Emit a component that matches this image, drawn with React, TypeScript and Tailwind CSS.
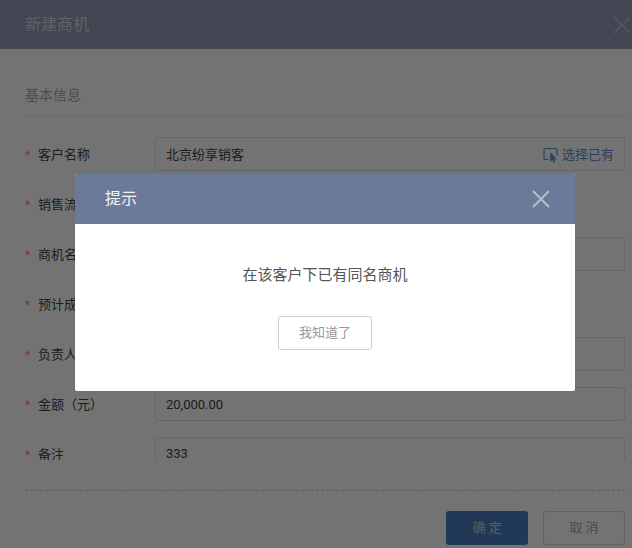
import { X } from 'lucide-react';

const rows = [
  { label: '客户名称', value: '北京纷享销客', pick: true },
  { label: '销售流程', value: '', plain: true },
  { label: '商机名称', value: '' },
  { label: '预计成交日期', value: '', plain: true },
  { label: '负责人', value: '' },
  { label: '金额（元）', value: '20,000.00' },
  { label: '备注', value: '333', top: true },
];

function PickIcon() {
  return (
    <svg width="16" height="16" viewBox="0 0 16 16" fill="none" stroke="currentColor" className="shrink-0">
      <path d="M5.5 12.5H2.5a1.5 1.5 0 0 1-1.5-1.5V3a1.5 1.5 0 0 1 1.5-1.5h10A1.5 1.5 0 0 1 14 3v5.5" strokeWidth="1.2" />
      <path d="M7.5 5.5v9l2-1.8 1.2 2.8 1.2-.6-1.2-2.7h2.6z" fill="currentColor" strokeWidth="0.4" />
    </svg>
  );
}

export default function App() {
  return (
    <div
      className="relative h-[548px] w-[632px] overflow-hidden bg-white text-[13px] text-[#444]"
      style={{ fontFamily: 'Roboto, "Noto Sans CJK SC", sans-serif' }}
    >
      {/* page behind the dialog */}
      <div className="flex h-[49px] items-center justify-between bg-[#919bb6] pl-[25px]">
        <span className="text-base text-[#d5d9e3]">新建商机</span>
        <X className="-mr-[5px] h-[30px] w-[30px] text-[#b0b8cc]" strokeWidth={1.5} />
      </div>

      <div className="pl-[25px] pr-[7px]">
        <div className="flex h-[68px] items-end border-b border-[#e8e8e8] pb-[11px] text-sm leading-5 text-[#aaa]">基本信息</div>
        <div className="h-[343px] overflow-hidden pt-5">
          <div className="flex flex-col gap-4">
            {rows.map((row) => (
              <div key={row.label} className="flex h-[34px] items-center">
                <div className="flex w-[130px] items-center pt-px">
                  <span className="w-[13px] text-xs text-[#f08a78]">*</span>
                  <span>{row.label}</span>
                </div>
                <div
                  className={`flex h-[34px] flex-1 items-center justify-between rounded-[3px] px-[10px] ${
                    row.plain ? '' : 'border border-[#e2e2e2]'
                  }`}
                >
                  <span className={row.top ? 'text-[#444]' : 'pt-px text-[#444]'}>{row.value}</span>
                  {row.pick && (
                    <span className="flex items-center gap-[3px] pt-px text-[#5b8fd0]">
                      <PickIcon />
                      选择已有
                    </span>
                  )}
                </div>
              </div>
            ))}
          </div>
        </div>
        <div className="mt-[30px] border-t border-dashed border-[#ccc]" />
        <div className="mt-5 flex justify-end gap-[15px]">
          <button className="h-[34px] w-[82px] rounded-[3px] bg-[#4a7ec0] text-[#c5d0e0]">确 定</button>
          <button className="h-[34px] w-[82px] rounded-[3px] border border-[#d5d5d5] text-[#aaa]">取 消</button>
        </div>
      </div>

      {/* overlay + prompt */}
      <div className="absolute inset-0 bg-black/55" />
      <div className="absolute left-[75px] top-[174px] w-[500px] overflow-hidden rounded-[2px] bg-white">
        <div className="flex h-[50px] items-center justify-between bg-[#6b7a99] pl-[30px] pr-[19px]">
          <span className="text-base text-[#f2f3f6]">提示</span>
          <X className="h-[30px] w-[30px] text-[#b6bdcd]" strokeWidth={1.6} />
        </div>
        <div className="flex h-[167px] flex-col items-center pt-[40px]">
          <p className="text-[15px] leading-[22px] text-[#555]">在该客户下已有同名商机</p>
          <button className="mt-[30px] h-[34px] w-[94px] rounded-[3px] border border-[#ccc] text-[13px] text-[#999]">我知道了</button>
        </div>
      </div>
    </div>
  );
}
